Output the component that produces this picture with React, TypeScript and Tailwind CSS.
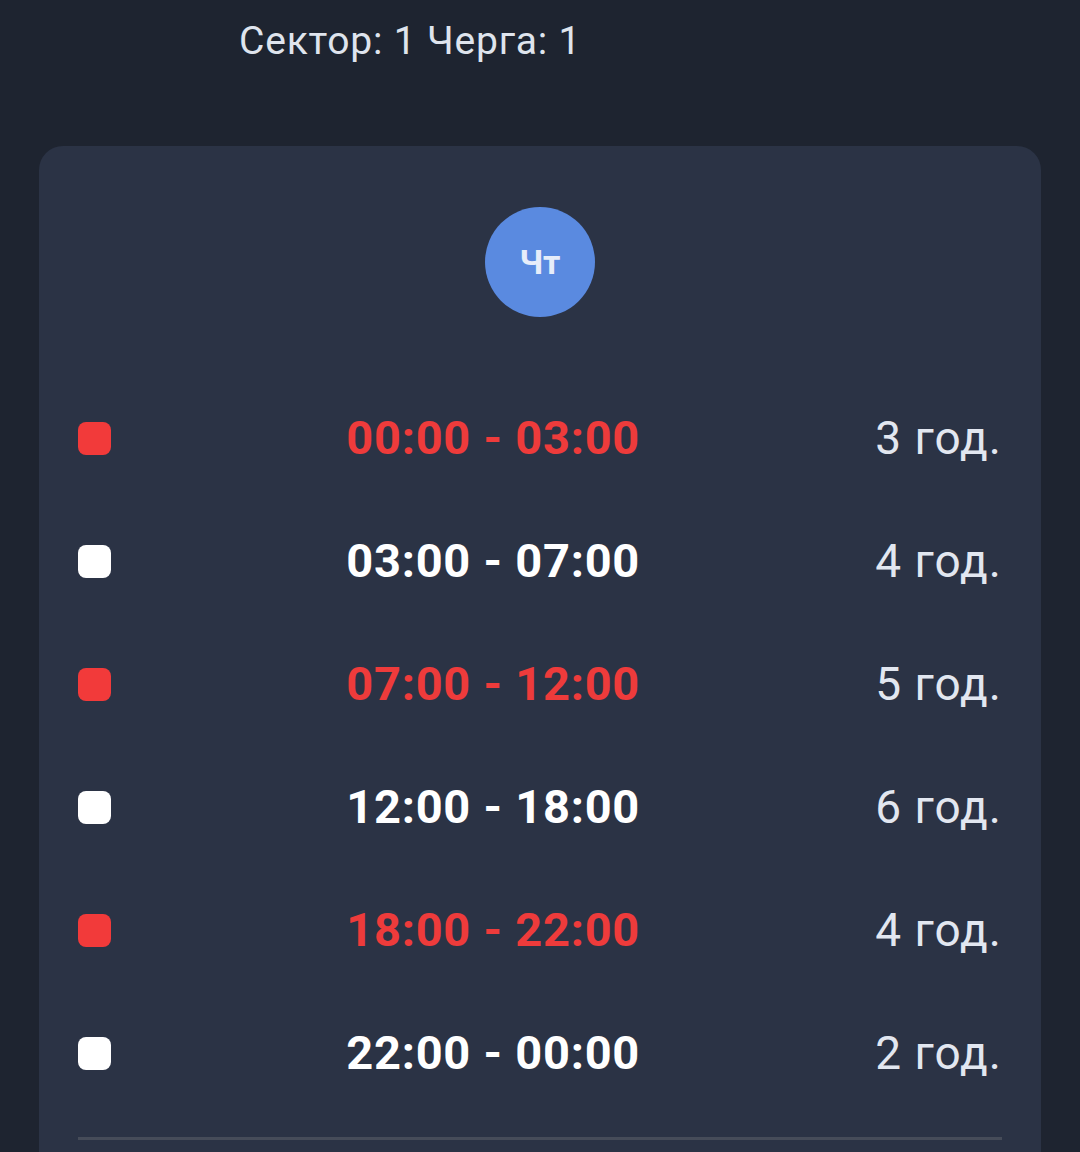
import React from "react"

const slots = [
  { from: "00:00", to: "03:00", hours: 3, off: true },
  { from: "03:00", to: "07:00", hours: 4, off: false },
  { from: "07:00", to: "12:00", hours: 5, off: true },
  { from: "12:00", to: "18:00", hours: 6, off: false },
  { from: "18:00", to: "22:00", hours: 4, off: true },
  { from: "22:00", to: "00:00", hours: 2, off: false },
]

export default function App() {
  return (
    <div className="min-h-[1152px] bg-[#1e2430] overflow-hidden" style={{ fontFamily: "Roboto, 'Noto Sans', sans-serif" }}>
      <div className="pt-[16px] pl-[239px] h-[146px]">
        <span className="text-[39px] tracking-[0.8px] text-[#dfe4ed] leading-[50px]">Сектор: 1 Черга: 1</span>
      </div>

      <div className="mx-[39px] rounded-[24px] bg-[#2b3345] px-[39px] pt-[61px] pb-[40px]">
        <div className="flex justify-center">
          <div className="w-[110px] h-[110px] rounded-full bg-[#5a8ae0] flex items-center justify-center">
            <span className="text-[34px] font-bold text-[#e6edfa]">Чт</span>
          </div>
        </div>

        <div className="mt-[60px]">
          {slots.map((s) => (
            <div key={s.from} className="h-[123px] flex items-center">
              <div className={s.off ? "w-[33px] h-[33px] rounded-[8px] bg-[#f23a3a]" : "w-[33px] h-[33px] rounded-[8px] bg-white"} />
              <div className="flex-1 text-center">
                <span className={s.off ? "text-[47px] tracking-[0.75px] font-bold text-[#ee3b3b]" : "text-[47px] tracking-[0.75px] font-bold text-white"}>
                  {s.from} - {s.to}
                </span>
              </div>
              <div className="text-[46px] tracking-[1px] text-[#e2e7f0]">{s.hours} год.</div>
            </div>
          ))}
        </div>

        <div className="mt-[22px] h-[3px] bg-[#464c59]" />
      </div>
    </div>
  )
}
